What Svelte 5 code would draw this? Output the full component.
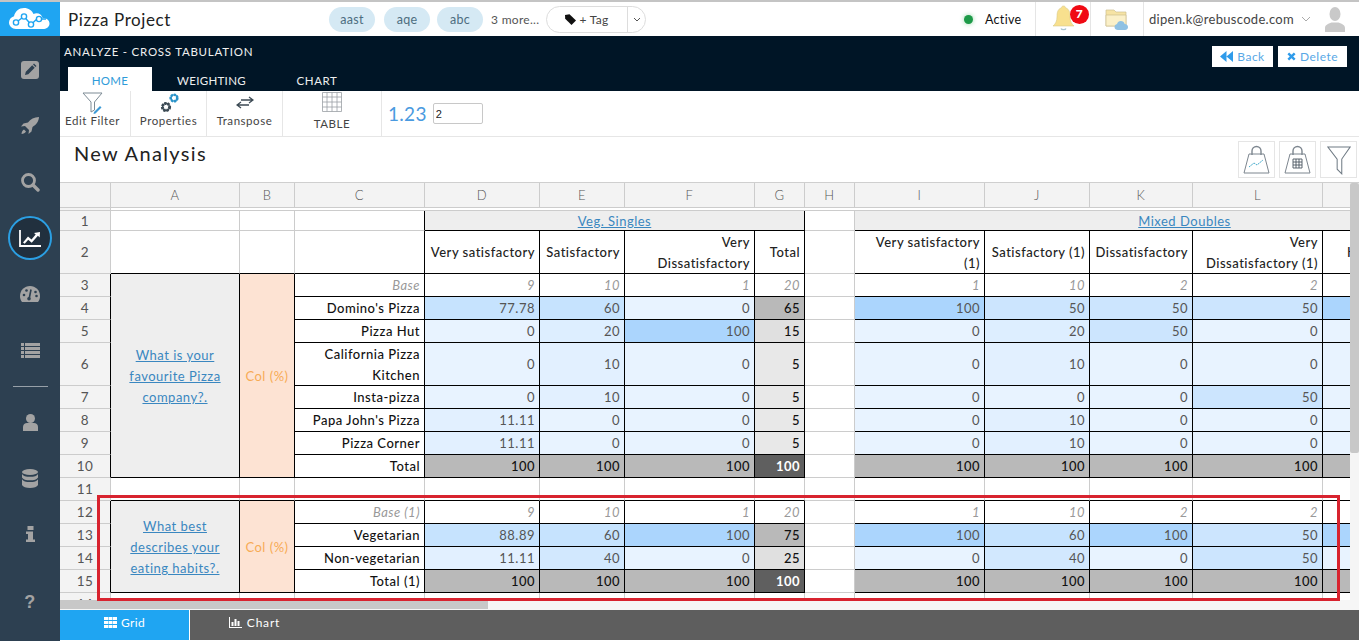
<script>
  const colWidths = [51, 129, 55, 130, 115, 85, 130, 50, 50, 130, 105, 103, 130, 192];
  const letters = ['', 'A', 'B', 'C', 'D', 'E', 'F', 'G', 'H', 'I', 'J', 'K', 'L', ''];

  const heat = (v) => {
    if (v >= 100) return '#abd5fd';
    const t = (Math.min(v, 60) / 60) * 0.55;
    const mix = (a, b) => Math.round(a + (b - a) * t);
    return `rgb(${mix(232, 171)},${mix(243, 213)},${mix(255, 253)})`;
  };
  const grey = (v) => (v > 50 ? '#b9b9b9' : v > 10 ? '#e0e0e0' : '#e8e8e8');

  const block1 = [
    { n: 3, label: 'Base', kind: 'base', left: [9, 10, 1, 20], right: [1, 10, 2, 2, ''] },
    { n: 4, label: "Domino's Pizza", kind: 'data', left: [77.78, 60, 0, 65], right: [100, 50, 50, 50, 100] },
    { n: 5, label: 'Pizza Hut', kind: 'data', left: [0, 20, 100, 15], right: [0, 20, 50, 0, 0] },
    { n: 6, label: 'California Pizza Kitchen', kind: 'data', tall: true, left: [0, 10, 0, 5], right: [0, 10, 0, 0, 0] },
    { n: 7, label: 'Insta-pizza', kind: 'data', left: [0, 10, 0, 5], right: [0, 0, 0, 50, 0] },
    { n: 8, label: "Papa John's Pizza", kind: 'data', left: [11.11, 0, 0, 5], right: [0, 10, 0, 0, 0] },
    { n: 9, label: 'Pizza Corner', kind: 'data', left: [11.11, 0, 0, 5], right: [0, 10, 0, 0, 0] },
    { n: 10, label: 'Total', kind: 'total', left: [100, 100, 100, 100], right: [100, 100, 100, 100, ''] }
  ];
  const block2 = [
    { n: 12, label: 'Base (1)', kind: 'base', left: [9, 10, 1, 20], right: [1, 10, 2, 2, ''] },
    { n: 13, label: 'Vegetarian', kind: 'data', left: [88.89, 60, 100, 75], right: [100, 60, 100, 50, 100] },
    { n: 14, label: 'Non-vegetarian', kind: 'data', left: [11.11, 40, 0, 25], right: [0, 40, 0, 50, 0] },
    { n: 15, label: 'Total (1)', kind: 'total', left: [100, 100, 100, 100], right: [100, 100, 100, 100, ''] }
  ];
  const blocks = [
    { q: 'What is your favourite Pizza company?.', rows: block1 },
    { q: 'What best describes your eating habits?.', rows: block2 }
  ];
  const headLeft = ['Very satisfactory', 'Satisfactory', 'Very Dissatisfactory', 'Total'];
  const headRight = ['Very satisfactory (1)', 'Satisfactory (1)', 'Dissatisfactory', 'Very Dissatisfactory (1)'];
</script>

<div class="root">
  <aside class="side">
    <div class="logo">
      <svg width="44" height="26" viewBox="0 0 44 26">
        <path fill="#fff" d="M8 23c-4 0-7-3-7-6.500 0-3 2-5.500 5-6.300C7 5.500 11 2 16 2c4.500 0 8 2.500 9.500 6 1-.5 2-.7 3-.7 3 0 5.500 2 6 4.700 3.500 0 7 1.800 7 5.500S38 23 35 23z"/>
        <g fill="none" stroke="#1fa5f2" stroke-width="1.400">
          <path d="M8 16.500l8-6 7 8 6-5.500h9"/>
          <circle cx="8" cy="16.500" r="2.600" fill="#fff"/>
          <circle cx="16" cy="10.500" r="2.600" fill="#fff"/>
          <circle cx="23" cy="18.500" r="2.600" fill="#fff"/>
          <circle cx="31" cy="13" r="2.600" fill="#fff"/>
        </g>
      </svg>
    </div>
    <nav class="side-nav">
      <div class="side-item">
        <svg width="18" height="18" viewBox="0 0 18 18"><rect width="18" height="18" rx="3" fill="#a3a3a3"/><path fill="#2d4051" d="M4 14l.8-3.300 6.400-6.400 2.500 2.500-6.400 6.400zM12 3.500l1-1 2.500 2.500-1 1z"/></svg>
      </div>
      <div class="side-item">
        <svg width="20" height="20" viewBox="0 0 20 20"><path fill="#a3a3a3" d="M19 1c-5 .3-8.500 2-11 5.500L3.500 7.500 1 10.500l4-.5 4 4-.5 4 3-2.500 1-4.500C16 8.700 18.700 6 19 1zM4 13.500c-1.500.8-2.300 2.500-2.500 4.500 2-.2 3.700-1 4.500-2.500z"/></svg>
      </div>
      <div class="side-item">
        <svg width="20" height="20" viewBox="0 0 20 20"><circle cx="8.500" cy="8.500" r="6" fill="none" stroke="#a3a3a3" stroke-width="2.800"/><path d="M13 13l5 5" stroke="#a3a3a3" stroke-width="3.400" stroke-linecap="round"/></svg>
      </div>
      <div class="side-item">
        <div class="active-ring">
          <svg width="22" height="17" viewBox="0 0 22 17"><path d="M1 0v16h21" fill="none" stroke="#fff" stroke-width="1.800"/><path fill="#fff" d="M4 12.500l5-6 3.500 3 4.200-5-1.700-1.600L21 2l-.3 5.500-1.800-1.700-6.200 7-3.500-3-3.500 4z"/></svg>
        </div>
      </div>
      <div class="side-item">
        <svg width="20" height="16" viewBox="0 0 20 16"><path fill="#a3a3a3" d="M10 0C4.500 0 0 4.300 0 10c0 2.300.7 4.300 2 6h16c1.300-1.700 2-3.700 2-6 0-5.700-4.500-10-10-10z"/><circle cx="4" cy="9" r="1.300" fill="#2d4051"/><circle cx="6.500" cy="4.500" r="1.300" fill="#2d4051"/><circle cx="15.500" cy="6" r="1.300" fill="#2d4051"/><circle cx="16.500" cy="10" r="1.300" fill="#2d4051"/><path d="M11 3.500l-1.800 9" stroke="#2d4051" stroke-width="1.600"/><circle cx="9" cy="12.800" r="1.800" fill="#2d4051"/></svg>
      </div>
      <div class="side-item">
        <svg width="19" height="15" viewBox="0 0 19 15" fill="#a3a3a3"><rect width="3" height="3"/><rect x="4" width="15" height="3"/><rect y="4" width="3" height="3"/><rect x="4" y="4" width="15" height="3"/><rect y="8" width="3" height="3"/><rect x="4" y="8" width="15" height="3"/><rect y="12" width="3" height="3"/><rect x="4" y="12" width="15" height="3"/></svg>
      </div>
      <div class="side-rule"></div>
      <div class="side-item">
        <svg width="15" height="17" viewBox="0 0 15 17" fill="#a3a3a3"><circle cx="7.500" cy="4.500" r="4.500"/><path d="M0 17v-4c0-2.500 2-4 4-4h7c2 0 4 1.500 4 4v4z"/></svg>
      </div>
      <div class="side-item">
        <svg width="16" height="19" viewBox="0 0 16 19" fill="#a3a3a3"><ellipse cx="8" cy="3" rx="8" ry="3"/><path d="M0 5c1 2 4 2.800 8 2.800S15 7 16 5v3.500c-1 2-4 2.800-8 2.800S1 10.500 0 8.500zM0 10.200c1 2 4 2.800 8 2.800s7-.8 8-2.800V16c-1 2-4 3-8 3s-7-1-8-3z"/></svg>
      </div>
      <div class="side-item">
        <svg width="9" height="16" viewBox="0 0 9 16" fill="#a3a3a3"><path d="M1.500 0h6v4h-6zM0 5.500h7v8h2V16H0v-2.500h2V8H0z"/></svg>
      </div>
      <div class="side-item help">?</div>
    </nav>
  </aside>

  <main class="main">
    <header class="topbar">
      <div class="project">Pizza Project</div>
      <div class="tags">
        <span class="pill">aast</span>
        <span class="pill">aqe</span>
        <span class="pill">abc</span>
        <span class="more">3 more...</span>
        <div class="tag-btn">
          <span class="tag-main">
            <svg width="11" height="11" viewBox="0 0 11 11"><path fill="#111" d="M0 1l4.500-.8L11 6.500 6.500 11 .2 4.700z"/></svg>
            + Tag
          </span>
          <span class="tag-caret">
            <svg width="8" height="5" viewBox="0 0 8 5"><path d="M1 1l3 3 3-3" fill="none" stroke="#555"/></svg>
          </span>
        </div>
      </div>
      <div class="status"><i class="dot"></i>Active</div>
      <div class="cell bell">
        <svg width="23" height="28" viewBox="0 0 23 28"><path fill="#f8e08e" stroke="#d8c98a" stroke-width=".6" d="M11.500 1c1.300 0 2 .8 2 1.800C17.500 4 18 8 18 12c0 4 1.500 7 4 9H1c2.500-2 4-5 4-9 0-4 .5-8 4.500-9.200 0-1 .7-1.800 2-1.800z"/><path d="M9 23.500c.5 1.500 4.500 1.500 5 0" fill="none" stroke="#aac3cf" stroke-width="1.200"/></svg>
        <span class="badge">7</span>
      </div>
      <div class="cell folder">
        <svg width="24" height="23" viewBox="0 0 24 23"><path fill="#f6e3a4" stroke="#cdbf91" stroke-width=".7" d="M1 2h8l2 2h10v14H1z"/><path fill="#fbf0c8" stroke="#cdbf91" stroke-width=".7" d="M1 7h20v11H1z"/><path fill="#8fc1e3" d="M13 22c-2 0-3.500-1.300-3.500-3 0-1.500 1-2.700 2.500-3 .5-2 2-3 3.800-3 2 0 3.500 1.300 3.900 3.100 2 .1 3.300 1.400 3.300 3S22 22 20 22z"/></svg>
      </div>
      <div class="user">dipen.k@rebuscode.com
        <svg width="10" height="6" viewBox="0 0 10 6"><path d="M1 1l4 4 4-4" fill="none" stroke="#aaa"/></svg>
      </div>
      <svg class="avatar" width="20" height="25" viewBox="0 0 20 25" fill="#c9c9c9"><ellipse cx="10" cy="7" rx="5.500" ry="7"/><path d="M0 25v-4c0-3 3-4 6.500-5.500h7C17 17 20 18 20 21v4z"/></svg>
    </header>

    <section class="dark">
      <div class="dark-left">
        <div class="crumb">ANALYZE - CROSS TABULATION</div>
        <div class="tabs">
          <span class="tab on">HOME</span>
          <span class="tab w">WEIGHTING</span>
          <span class="tab c">CHART</span>
        </div>
      </div>
      <div class="dark-btns">
        <button class="act back">
          <svg width="13" height="11" viewBox="0 0 12 10"><path fill="#2f9bea" d="M6 0v10L0 5zM12 0v10L6 5z"/></svg>
          Back
        </button>
        <button class="act del">
          <svg width="9" height="9" viewBox="0 0 9 9"><path d="M1.300 1.300l6.400 6.400M7.700 1.300L1.300 7.700" stroke="#2f9bea" stroke-width="2.400"/></svg>
          Delete
        </button>
      </div>
    </section>

    <section class="toolbar">
      <div class="tool t1">
        <svg width="22" height="22" viewBox="0 0 22 22"><path d="M1 1h19l-7.500 9v8L9 20v-10z" fill="none" stroke="#7d8b95"/><path d="M12 20l6-6 1.500 1.500-6 6-2 .5z" fill="#3d9bd7"/></svg>
        <span>Edit Filter</span>
      </div>
      <div class="tool t2">
        <svg width="20" height="22" viewBox="0 0 20 22"><circle cx="7" cy="15" r="3.600" fill="none" stroke="#3c4a54" stroke-width="3" stroke-dasharray="2 1"/><circle cx="7" cy="15" r="3.400" fill="none" stroke="#3c4a54" stroke-width="1.500"/><circle cx="15" cy="6" r="3.300" fill="none" stroke="#2a93c9" stroke-width="2.600" stroke-dasharray="2 1"/><circle cx="15" cy="6" r="3.100" fill="none" stroke="#2a93c9" stroke-width="1.400"/></svg>
        <span>Properties</span>
      </div>
      <div class="tool t3">
        <svg width="18" height="20" viewBox="0 0 18 20"><path d="M5 4h12M13 1l4 3-4 3" fill="none" stroke="#3c4a54" stroke-width="1.300" transform="translate(0 3)"/><path d="M1 11h12M5 8l-4 3 4 3" fill="none" stroke="#3c4a54" stroke-width="1.300" transform="translate(0 1)"/></svg>
        <span>Transpose</span>
      </div>
      <div class="tool t4">
        <svg width="20" height="20" viewBox="0 0 20 20"><path d="M.5.500h19v19H.5zM.5 5h19M.5 10h19M.5 15h19M5 .5v19M10 .5v19M15 .5v19" fill="none" stroke="#9aa0a5" stroke-width=".8"/></svg>
        <span>TABLE</span>
      </div>
      <div class="decimals">
        <span>1.23</span>
        <input value="2" aria-label="Decimals" />
      </div>
    </section>

    <section class="title">
      <h1>New Analysis</h1>
      <div class="title-icons">
        <div class="box"><svg width="27" height="30" viewBox="0 0 27 30"><path d="M9 10V6a4.500 4.500 0 0 1 9 0v4" fill="none" stroke="#7d868f" stroke-width="1.400"/><path d="M6 9h15l5 19H1z" fill="none" stroke="#7d868f"/><path d="M6 22l5-4 3 2 6-5" fill="none" stroke="#45aacb" stroke-dasharray="2 .8"/></svg></div>
        <div class="box"><svg width="27" height="30" viewBox="0 0 27 30"><path d="M9 10V6a4.500 4.500 0 0 1 9 0v4" fill="none" stroke="#7d868f" stroke-width="1.400"/><path d="M6 9h15l5 19H1z" fill="none" stroke="#7d868f"/><path d="M9 14h9v9H9zM9 17h9M9 20h9M12 14v9M15 14v9" fill="none" stroke="#4a5560" stroke-width=".9"/></svg></div>
        <div class="box"><svg width="24" height="30" viewBox="0 0 26 32"><path d="M1 2h24l-9 13v16l-5-5V15z" fill="none" stroke="#6f7a84" stroke-width="1.100"/></svg></div>
      </div>
    </section>

    <section class="sheet">
      <div class="view-row">
        <div class="view">
          <table>
            <colgroup>
              {#each colWidths as w}<col style="width:{w}px" />{/each}
            </colgroup>
            <tbody>
              <tr class="head">
                {#each letters as l}<td class="colhd">{l}</td>{/each}
              </tr>
              <tr class="spacer">
                <td class="rh"></td>
                <td colspan="13"></td>
              </tr>
              <tr class="r1">
                <td class="rh">1</td>
                <td></td><td></td><td class="kr"></td>
                <td colspan="4" class="band kb kr"><a href="#veg">Veg. Singles</a></td>
                <td></td>
                <td colspan="5" class="band kb"><a href="#mixed">Mixed Doubles</a></td>
              </tr>
              <tr class="r2">
                <td class="rh">2</td>
                <td class="kb"></td><td class="kb"></td><td class="k"></td>
                {#each headLeft as h}<td class="k hd">{h}</td>{/each}
                <td></td>
                {#each headRight as h}<td class="k hd">{h}</td>{/each}
                <td class="k hd m2">Highly</td>
              </tr>
              {#each blocks as b, bi}
                {#each b.rows as r, i}
                  <tr class:tall={r.tall}>
                    <td class="rh kr">{r.n}</td>
                    {#if i === 0}
                      <td class="k q" rowspan={b.rows.length}><a href="#q">{b.q}</a></td>
                      <td class="k pct" rowspan={b.rows.length}>Col (%)</td>
                    {/if}
                    <td class="k lab {r.kind}">{r.label}</td>
                    {#each r.left as v, j}
                      {#if r.kind === 'base'}
                        <td class="k num base">{v}</td>
                      {:else if r.kind === 'total'}
                        <td class="k num tot" class:last={j === 3}>{v}</td>
                      {:else if j === 3}
                        <td class="k num gt" style="background:{grey(v)}">{v}</td>
                      {:else}
                        <td class="k num" style="background:{heat(v)}">{v}</td>
                      {/if}
                    {/each}
                    <td></td>
                    {#each r.right as v}
                      {#if r.kind === 'base'}
                        <td class="k num base">{v}</td>
                      {:else if r.kind === 'total'}
                        <td class="k num tot">{v}</td>
                      {:else}
                        <td class="k num" style="background:{heat(v)}">{v}</td>
                      {/if}
                    {/each}
                  </tr>
                {/each}
                {#if bi === 0}
                  <tr>
                    <td class="rh">11</td>
                    <td class="kb"></td><td class="kb"></td><td class="kb"></td>
                    <td class="kb"></td><td class="kb"></td><td class="kb"></td><td class="kb"></td>
                    <td></td>
                    <td class="kb"></td><td class="kb"></td><td class="kb"></td><td class="kb"></td><td class="kb"></td>
                  </tr>
                {/if}
              {/each}
              <tr>
                <td class="rh">16</td>
                {#each Array(13) as _}<td></td>{/each}
              </tr>
            </tbody>
          </table>
        </div>
        <div class="vbar"><div class="vthumb"></div></div>
      </div>
      <div class="hbar"><div class="hthumb"></div></div>
    </section>

    <footer class="bottom">
      <div class="btab grid">
        <svg width="13" height="11" viewBox="0 0 13 11" fill="#fff"><path d="M0 0h4v3H0zM4.500 0h4v3h-4zM9 0h4v3H9zM0 4h4v3H0zM4.500 4h4v3h-4zM9 4h4v3H9zM0 8h4v3H0zM4.500 8h4v3h-4zM9 8h4v3H9z"/></svg>
        Grid
      </div>
      <div class="btab chart">
        <svg width="13" height="11" viewBox="0 0 13 11" fill="#fff"><path d="M0 0h1v10h12v1H0zM2.500 5h2v4h-2zM5.500 2h2v7h-2zM8.500 4h2v5h-2z"/></svg>
        Chart
      </div>
    </footer>
  </main>

  <div class="redbox"></div>
</div>

<style>
  :global(body) {
    margin: 0;
    background: #2d4051;
  }
  .root {
    --ff: Lato, "Noto Sans", sans-serif;
    position: relative;
    box-sizing: border-box;
    width: 1359px;
    height: 641px;
    border-top: 2px solid #c4c4c4;
    display: flex;
    overflow: hidden;
    font-family: var(--ff);
    letter-spacing: 0.3px;
    background: #fff;
  }

  /* Sidebar */
  .side {
    width: 60px;
    flex: none;
    background: #2d4051;
  }
  .logo {
    height: 34px;
    background: #1fa5f2;
    display: flex;
    align-items: center;
    justify-content: center;
  }
  .side-nav {
    padding-top: 6px;
    display: flex;
    flex-direction: column;
  }
  .side-item {
    height: 56px;
    flex: none;
    display: flex;
    align-items: center;
    justify-content: center;
  }
  .active-ring {
    width: 40px;
    height: 40px;
    border: 2px solid #2b9fe3;
    border-radius: 50%;
    background: #21303e;
    display: flex;
    align-items: center;
    justify-content: center;
  }
  .side-rule {
    height: 1px;
    background: #97a0a8;
    margin: 8px 12px 7px 13px;
  }
  .help {
    margin-top: 12px;
    color: #a3a3a3;
    font: 700 18px "Liberation Sans", sans-serif;
  }

  /* Main column */
  .main {
    flex: 1;
    min-width: 0;
    display: flex;
    flex-direction: column;
  }

  /* Top bar */
  .topbar {
    height: 34px;
    flex: none;
    display: flex;
    align-items: center;
    color: #333;
  }
  .topbar > * {
    flex: none;
  }
  .project {
    width: 269px;
    padding-left: 8px;
    box-sizing: border-box;
    font-size: 17px;
    letter-spacing: 0.6px;
    color: #222;
  }
  .tags {
    display: flex;
    align-items: center;
    width: 635px;
    font-size: 12px;
  }
  .pill {
    width: 46px;
    height: 25px;
    margin-right: 9px;
    border-radius: 13px;
    background: #d5e9f4;
    color: #4d6d80;
    display: flex;
    align-items: center;
    justify-content: center;
    font-size: 12.5px;
  }
  .pill:nth-child(3) {
    margin-right: 8px;
  }
  .pill:nth-child(2) {
    margin-right: 7px;
  }
  .more {
    width: 55px;
    color: #555;
  }
  .tag-btn {
    width: 100px;
    height: 27px;
    border: 1px solid #ddd;
    border-radius: 14px;
    display: flex;
    box-sizing: border-box;
    background: #fff;
  }
  .tag-main {
    width: 80px;
    display: flex;
    align-items: center;
    justify-content: center;
    gap: 3px;
    border-right: 1px solid #ddd;
    color: #444;
  }
  .tag-caret {
    flex: 1;
    display: flex;
    align-items: center;
    justify-content: center;
  }
  .status {
    width: 71px;
    display: flex;
    align-items: center;
    gap: 12px;
    font-size: 12.5px;
    color: #111;
  }
  .dot {
    width: 9px;
    height: 9px;
    border-radius: 50%;
    background: #1d9a48;
    box-shadow: 0 0 5px #9ad8ab;
    flex: none;
  }
  .cell {
    height: 34px;
    box-sizing: border-box;
    border-left: 1px solid #e5e5e5;
    display: flex;
    align-items: center;
    position: relative;
  }
  .bell {
    width: 55px;
    padding-left: 16px;
  }
  .badge {
    position: absolute;
    left: 34px;
    top: 3px;
    width: 19px;
    height: 19px;
    border-radius: 50%;
    background: #f00a14;
    color: #fff;
    font-weight: 900;
    font-size: 12px;
    text-align: center;
    line-height: 18px;
  }
  .folder {
    width: 53px;
    padding-left: 14px;
  }
  .user {
    box-sizing: border-box;
    width: 182px;
    height: 34px;
    border-left: 1px solid #e5e5e5;
    padding-left: 5px;
    display: flex;
    align-items: center;
    gap: 7px;
    font-size: 13px;
    letter-spacing: 0.3px;
    color: #444;
  }

  /* Dark header */
  .dark {
    height: 55px;
    flex: none;
    background: #001526;
    display: flex;
    justify-content: space-between;
  }
  .crumb {
    padding: 10px 0 0 4px;
    color: #f0f0f0;
    font-size: 11.5px;
    line-height: 12px;
    letter-spacing: 0.75px;
  }
  .tabs {
    margin: 9px 0 0 8px;
    display: flex;
    height: 24px;
    font-size: 11.5px;
    color: #eee;
  }
  .tab {
    display: flex;
    align-items: center;
    justify-content: center;
    padding-top: 3px;
    box-sizing: border-box;
  }
  .tab.on {
    width: 84px;
    background: #fff;
    color: #2f9bd9;
  }
  .tab.w {
    width: 119px;
  }
  .tab.c {
    width: 92px;
    letter-spacing: 0.6px;
  }
  .dark-btns {
    display: flex;
    gap: 5px;
    padding: 10px 12px 0 0;
    height: 21px;
  }
  .act {
    height: 21px;
    border: 0;
    padding: 0;
    background: #fff;
    color: #58a8e6;
    font: 12px var(--ff);
    letter-spacing: 0.5px;
    display: flex;
    align-items: center;
    justify-content: center;
    gap: 4px;
  }
  .back {
    width: 61px;
  }
  .del {
    width: 69px;
  }

  /* Toolbar */
  .toolbar {
    height: 46px;
    flex: none;
    box-sizing: border-box;
    border-bottom: 1px solid #e6e6e6;
    display: flex;
  }
  .tool {
    box-sizing: border-box;
    border-right: 1px solid #e6e6e6;
    display: flex;
    flex-direction: column;
    align-items: center;
    font-size: 11.5px;
    letter-spacing: 0.55px;
    color: #444;
  }
  .tool svg {
    height: 22px;
    flex: none;
    margin-top: 1px;
  }
  .tool span {
    margin-top: -2px;
    line-height: 18px;
  }
  .t1 {
    width: 71px;
    padding-right: 5px;
  }
  .t2 {
    width: 76px;
  }
  .t3 {
    width: 76px;
  }
  .t4 {
    width: 99px;
  }
  .t4 svg {
    margin-top: 0;
  }
  .t4 span {
    margin-top: 2px;
  }
  .decimals {
    display: flex;
    align-items: center;
    gap: 6px;
    padding-left: 6px;
    color: #4a9ae0;
    font-size: 19px;
  }
  .decimals input {
    width: 50px;
    height: 21px;
    box-sizing: border-box;
    border: 1px solid #c8c8c8;
    border-radius: 2px;
    padding: 0 2px;
    font: 11px "Liberation Sans", sans-serif;
    color: #222;
  }

  /* Title */
  .title {
    height: 45px;
    flex: none;
    display: flex;
    justify-content: space-between;
  }
  .title h1 {
    margin: 3px 0 0 14px;
    font-size: 20px;
    line-height: 26px;
    font-weight: 400;
    letter-spacing: 1.35px;
    color: #222;
  }
  .title-icons {
    display: flex;
    gap: 4px;
    padding: 4px 2px 0 0;
    height: 37px;
  }
  .box {
    box-sizing: border-box;
    width: 37px;
    height: 37px;
    border: 1px solid #e5e5e5;
    display: flex;
    align-items: center;
    justify-content: center;
  }

  /* Sheet */
  .sheet {
    flex: 1;
    min-height: 0;
    display: flex;
    flex-direction: column;
    border-top: 1px solid #cfcfcf;
  }
  .view-row {
    flex: 1;
    min-height: 0;
    display: flex;
  }
  .view {
    flex: 1;
    min-width: 0;
    overflow: hidden;
  }
  table {
    table-layout: fixed;
    width: 1455px;
    border-collapse: separate;
    border-spacing: 0;
    font-size: 13px;
    letter-spacing: 0.5px;
    color: #222;
  }
  td {
    box-sizing: border-box;
    padding: 0 4px;
    height: 23px;
    line-height: 21px;
    border-right: 1px solid #ccc;
    border-bottom: 1px solid #ccc;
    overflow: hidden;
    background: #fff;
  }
  .head td {
    height: 25px;
  }
  .colhd {
    background: #f3f3f3;
    text-align: center;
    color: #555;
    font-size: 13px;
    font-weight: 300;
  }
  .spacer td {
    height: 3px;
    line-height: 0;
    font-size: 0;
  }
  .r1 td {
    height: 20px;
    line-height: 18px;
  }
  .r2 td,
  tr.tall td {
    height: 43px;
  }
  .rh {
    background: #f3f3f3;
    text-align: center;
    color: #555;
    font-size: 13.5px;
  }
  .k {
    border-right-color: #000;
    border-bottom-color: #000;
  }
  .kb {
    border-bottom-color: #000;
  }
  .kr {
    border-right-color: #000;
  }
  .band {
    background: #eee;
    text-align: center;
  }
  a {
    color: #3a87c0;
  }
  .hd {
    text-align: right;
    white-space: normal;
    font-weight: 500;
    color: #222;
    padding-top: 1px;
    line-height: 20.5px;
  }
  .m2 {
    text-align: left;
    padding-left: 24px;
  }
  .q {
    background: #eee;
    text-align: center;
    padding: 2px 16px 0;
  }
  .pct {
    background: #fde3d3;
    text-align: center;
    color: #f7ab55;
    padding: 2px 0 0;
  }
  .lab {
    text-align: right;
    font-weight: 500;
    color: #111;
  }
  tr.tall .lab {
    padding-top: 1px;
    line-height: 20.5px;
  }
  .lab.base {
    font-weight: 400;
    font-style: italic;
    color: #999;
  }
  .num {
    text-align: right;
    color: #555;
  }
  .num.base {
    font-style: italic;
    color: #999;
  }
  .num.gt {
    font-weight: 500;
    color: #111;
  }
  .num.tot {
    background: #b9b9b9;
    font-weight: 500;
    color: #111;
  }
  .num.tot.last {
    background: #5f5f5f;
    color: #fff;
    font-weight: 700;
  }

  /* Scrollbars */
  .vbar {
    width: 9px;
    flex: none;
    background: #f5f5f5;
  }
  .vthumb {
    height: 270px;
    background: #c8c8c8;
    border-radius: 2px;
  }
  .hbar {
    height: 10px;
    flex: none;
    background: #f6f6f6;
  }
  .hthumb {
    width: 428px;
    height: 9px;
    background: #c8c8c8;
  }

  /* Bottom tabs */
  .bottom {
    height: 30px;
    flex: none;
    margin-bottom: 1px;
    background: #5e5e5e;
    display: flex;
    color: #fff;
    font-size: 12px;
  }
  .btab {
    display: flex;
    align-items: center;
    justify-content: center;
    gap: 4px;
    padding-bottom: 5px;
    box-sizing: border-box;
  }
  .btab.grid {
    width: 130px;
    background: #1fa5f2;
    border-right: 1px solid #fff;
  }
  .btab.chart {
    width: 135px;
    gap: 5px;
    letter-spacing: 0.8px;
    padding-right: 6px;
  }

  /* Annotation */
  .redbox {
    position: absolute;
    left: 97px;
    top: 493px;
    width: 1243px;
    height: 106px;
    box-sizing: border-box;
    border: 3px solid #d8232f;
    pointer-events: none;
  }
</style>
